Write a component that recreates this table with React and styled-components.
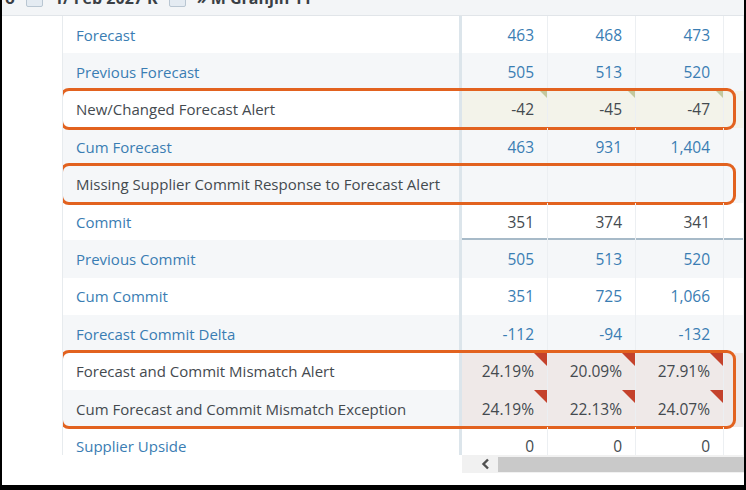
import React from 'react';
import styled, { createGlobalStyle, css } from 'styled-components';

const GlobalStyle = createGlobalStyle`
  html, body {
    margin: 0;
    padding: 0;
    background: #000;
  }
  body {
    font-family: "Open Sans", "Noto Sans", Arial, sans-serif;
  }
`;

const ROW_H = 37.4;

const Screen = styled.div`
  width: 742px;
  height: 485px;
  margin-left: 2px;
  background: #fff;
  display: flex;
  flex-direction: column;
  overflow: hidden;
`;

const TopBar = styled.div`
  height: 16px;
  flex: none;
  background: #f3f5f7;
  border-bottom: 1px solid #e1e5e9;
  overflow: hidden;
  box-sizing: border-box;
`;

const Crumbs = styled.div`
  display: flex;
  align-items: center;
  gap: 11px;
  margin-top: -10px;
  padding-left: 3px;
  height: 16px;
  font-size: 16px;
  font-weight: 700;
  color: #3a3f45;
  white-space: nowrap;
`;

const CrumbBox = styled.span`
  display: inline-block;
  width: 15px;
  height: 15px;
  border: 1px solid #b9c6d2;
  background: #e4ebf2;
  border-radius: 2px;
`;

const Body = styled.div`
  display: flex;
  flex: none;
`;

const Gutter = styled.div`
  width: 60px;
  flex: none;
`;

const Main = styled.div`
  flex: 1;
  display: flex;
  flex-direction: column;
`;

const Viewport = styled.div`
  height: 439px;
  overflow: hidden;
  border-left: 1px solid #e7ebee;
`;

const Table = styled.div`
  display: flex;
  flex-direction: column;
`;

const Highlight = styled.div`
  position: relative;
  &::after {
    content: '';
    position: absolute;
    top: -3px;
    bottom: -2px;
    left: -3px;
    right: 8px;
    border: 3px solid #e2621f;
    border-radius: 9px;
    pointer-events: none;
  }
`;

const Row = styled.div`
  display: grid;
  grid-template-columns: 399px 86px 88px 88px 1fr;
  height: ${ROW_H}px;
  background: ${(p) => (p.$striped ? '#f5f7f9' : '#fff')};
`;

const LabelCell = styled.div`
  display: flex;
  align-items: center;
  padding-left: 13px;
  border-right: 3px solid #dce5eb;
  font-size: 15px;
  color: ${(p) => (p.$link ? '#3a7db3' : '#444a4f')};
  white-space: nowrap;
`;

const alertBg = {
  warn: '#f3f3ea',
  error: '#efe9e8',
};

const ValueCell = styled.div`
  position: relative;
  display: flex;
  align-items: center;
  justify-content: flex-end;
  padding-right: 13px;
  border-right: 1px solid #eceff2;
  font-size: 15.5px;
  color: ${(p) => (p.$link ? '#3a7db3' : '#444a4f')};
  background: ${(p) => (p.$alert ? alertBg[p.$alert] : 'transparent')};
  ${(p) =>
    p.$underline &&
    css`
      box-shadow: inset 0 -2px 0 #a7bac8;
    `}
`;

const Flag = styled.span`
  position: absolute;
  top: 0;
  right: 0;
  width: 0;
  height: 0;
  border-top: ${(p) => (p.$alert === 'error' ? 13 : 7)}px solid
    ${(p) => (p.$alert === 'error' ? '#c4422c' : '#c3c99e')};
  border-left: ${(p) => (p.$alert === 'error' ? 13 : 7)}px solid transparent;
`;

const Footer = styled.div`
  display: flex;
  height: 18px;
`;

const FooterSpacer = styled.div`
  width: 400px;
  flex: none;
`;

const ScrollBar = styled.div`
  flex: 1;
  display: flex;
  background: #f1f1f1;
`;

const ScrollArrow = styled.div`
  width: 36px;
  display: flex;
  align-items: center;
  justify-content: center;
  padding-left: 10px;
  box-sizing: border-box;
`;

const ScrollThumb = styled.div`
  flex: 1;
  margin: 2px 0 1px;
  background: #c9c9c9;
`;

const rows = [
  { label: 'Forecast', link: true, values: ['463', '468', '473'], valueLink: true },
  { label: 'Previous Forecast', link: true, values: ['505', '513', '520'], valueLink: true, striped: true },
  { label: 'New/Changed Forecast Alert', values: ['-42', '-45', '-47'], alert: 'warn', group: 'a' },
  { label: 'Cum Forecast', link: true, values: ['463', '931', '1,404'], valueLink: true, striped: true },
  { label: 'Missing Supplier Commit Response to Forecast Alert', values: ['', '', ''], group: 'b', striped: true },
  { label: 'Commit', link: true, values: ['351', '374', '341'], underline: true },
  { label: 'Previous Commit', link: true, values: ['505', '513', '520'], valueLink: true, striped: true },
  { label: 'Cum Commit', link: true, values: ['351', '725', '1,066'], valueLink: true },
  { label: 'Forecast Commit Delta', link: true, values: ['-112', '-94', '-132'], valueLink: true, striped: true },
  { label: 'Forecast and Commit Mismatch Alert', values: ['24.19%', '20.09%', '27.91%'], alert: 'error', group: 'c' },
  { label: 'Cum Forecast and Commit Mismatch Exception', values: ['24.19%', '22.13%', '24.07%'], alert: 'error', group: 'c', striped: true },
  { label: 'Supplier Upside', link: true, values: ['0', '0', '0'] },
];

const DataRow = ({ row }) => (
  <Row $striped={row.striped}>
    <LabelCell $link={row.link}>{row.label}</LabelCell>
    {row.values.map((v, i) => (
      <ValueCell key={i} $link={row.valueLink} $alert={row.alert} $underline={row.underline}>
        {v}
        {row.alert && <Flag $alert={row.alert} />}
      </ValueCell>
    ))}
    <ValueCell $alert={row.alert} $underline={row.underline} />
  </Row>
);

const App = () => {
  // consecutive rows with the same group share one highlight box
  const blocks = [];
  rows.forEach((row, index) => {
    const last = blocks[blocks.length - 1];
    if (row.group && last && last.group === row.group) {
      last.items.push({ row, index });
    } else {
      blocks.push({ group: row.group, items: [{ row, index }] });
    }
  });

  return (
    <>
      <GlobalStyle />
      <Screen>
        <TopBar>
          <Crumbs>
            <span>o</span>
            <CrumbBox />
            <span>1/ Feb 2027 K</span>
            <CrumbBox />
            <span>» M Granjin 11</span>
          </Crumbs>
        </TopBar>
        <Body>
          <Gutter />
          <Main>
            <Viewport>
              <Table>
                {blocks.map((block, b) => {
                  const content = block.items.map(({ row, index }) => (
                    <DataRow key={index} row={row} />
                  ));
                  return block.group ? (
                    <Highlight key={b}>{content}</Highlight>
                  ) : (
                    <React.Fragment key={b}>{content}</React.Fragment>
                  );
                })}
              </Table>
            </Viewport>
            <Footer>
              <FooterSpacer />
              <ScrollBar>
                <ScrollArrow>
                  <svg width="9" height="12" viewBox="0 0 9 12">
                    <path d="M7 1.5 L2.5 6 L7 10.5" fill="none" stroke="#505050" strokeWidth="2.4" />
                  </svg>
                </ScrollArrow>
                <ScrollThumb />
              </ScrollBar>
            </Footer>
          </Main>
        </Body>
      </Screen>
    </>
  );
};

export default App;
